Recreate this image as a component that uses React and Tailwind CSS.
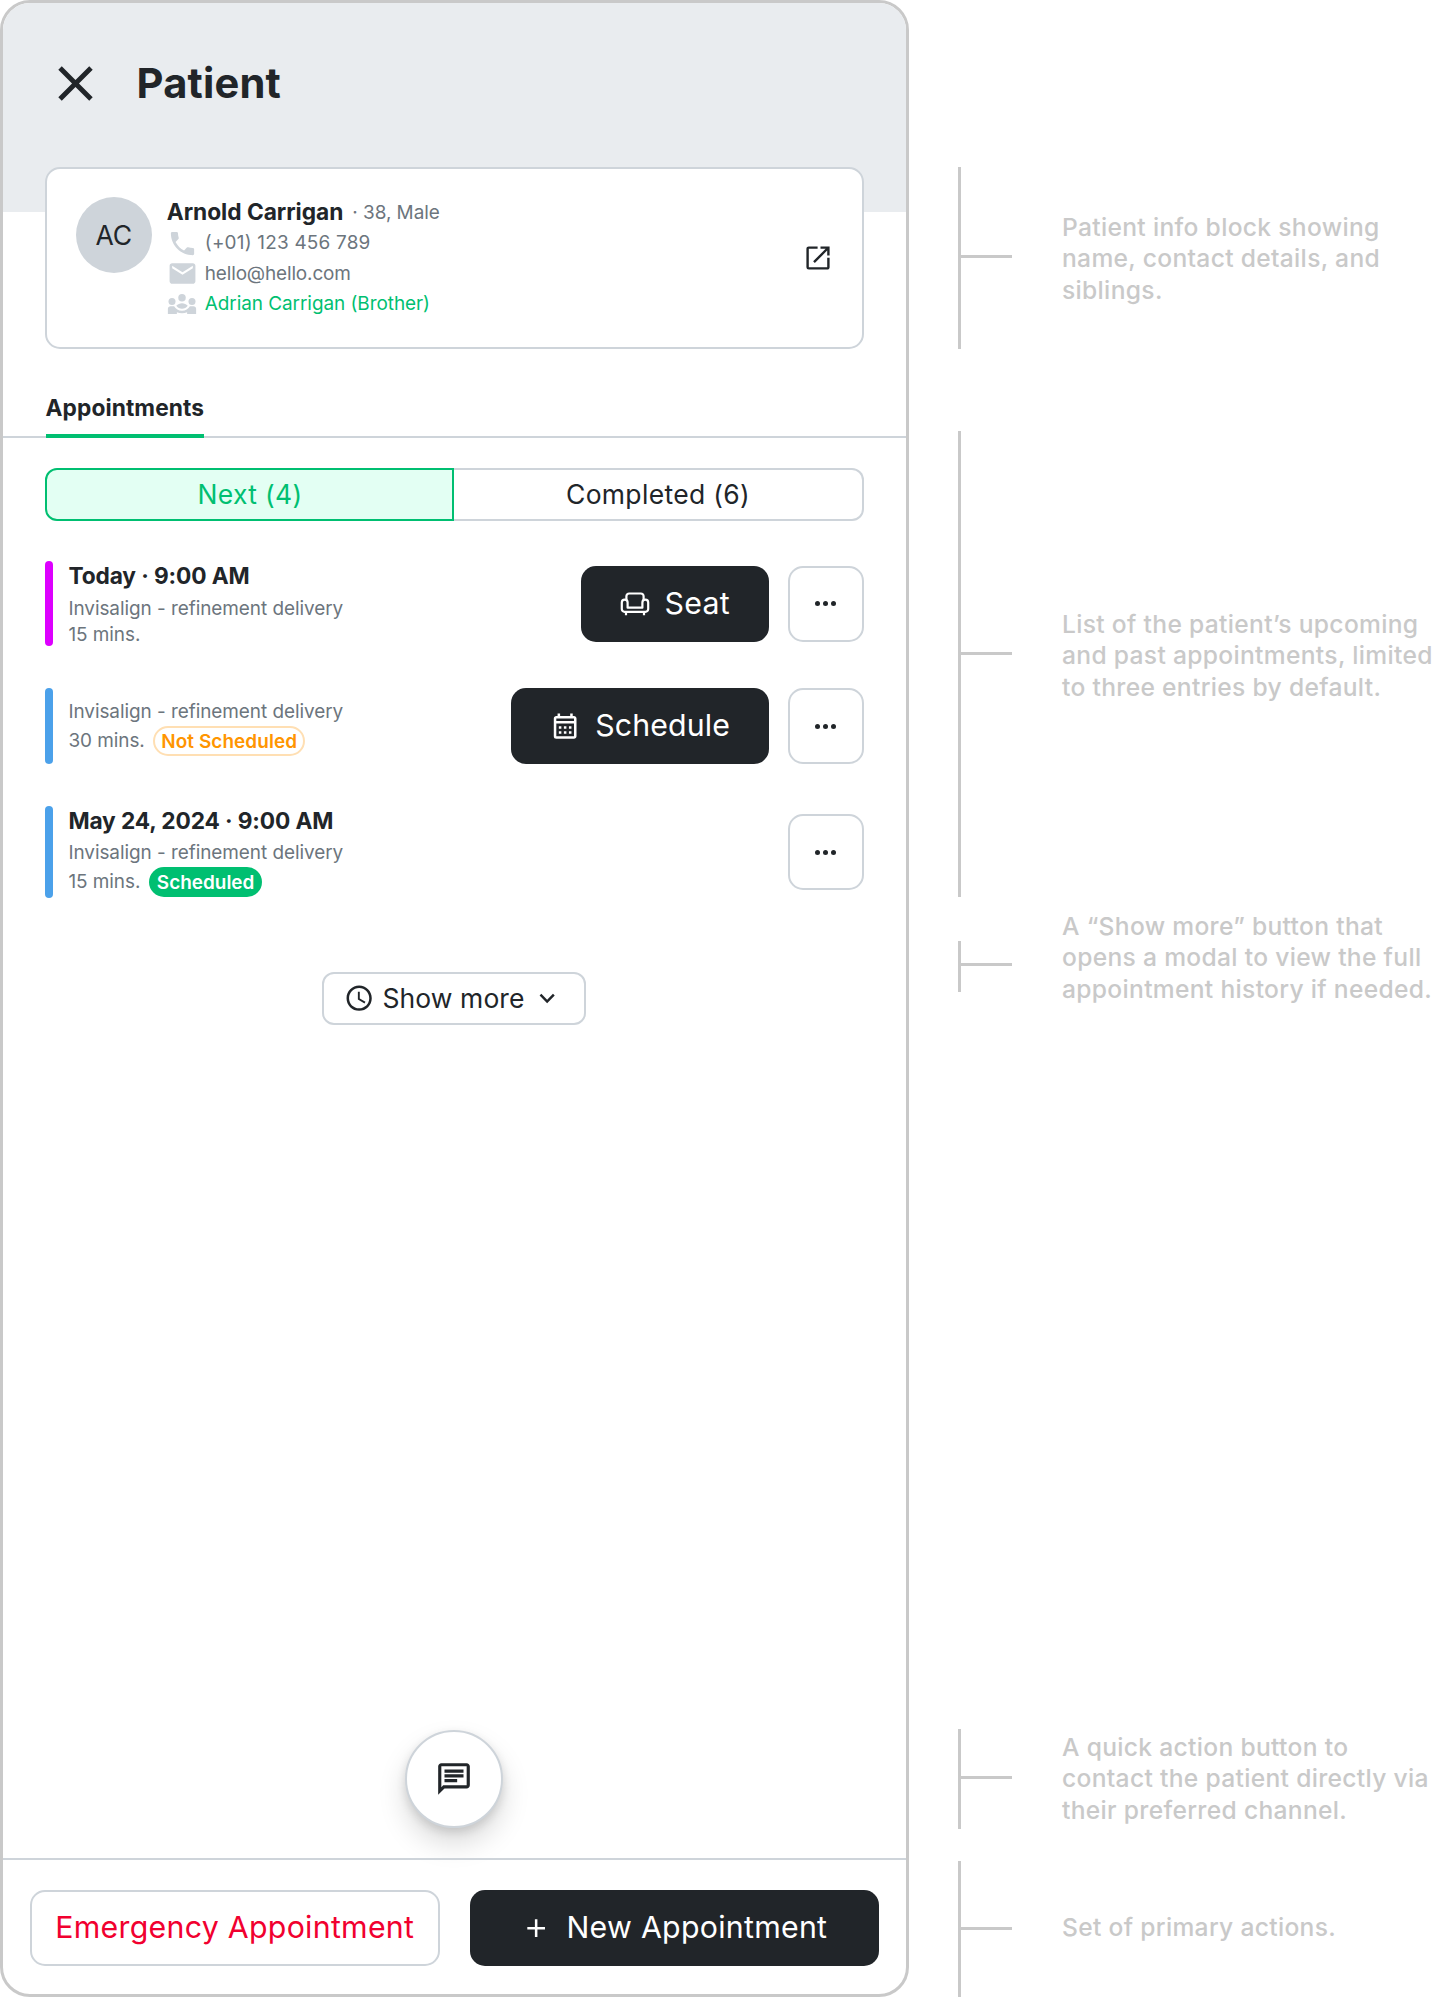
import {
  MdAdd,
  MdClose,
  MdEmail,
  MdExpandMore,
  MdOutlineCalendarMonth,
  MdOutlineChat,
  MdPhone,
  MdSchedule,
} from "react-icons/md";

function GroupIcon() {
  return (
    <svg viewBox="0 0 24 24" className="size-[30px]" fill="currentColor">
      <circle cx="12" cy="7" r="3" />
      <circle cx="4" cy="9.9" r="2.8" />
      <circle cx="20" cy="9.9" r="2.8" />
      <path d="M7.4 13.4C8.6 12 10.2 11.3 12 11.3s3.4.7 4.6 2.1c-1.1 1.5-2.7 2.3-4.6 2.3s-3.5-.8-4.6-2.3z" />
      <path d="M.7 20v-4.2c0-1.2 1-2.1 2.1-2.1h2.9c1.2 2.2 3.5 3.6 6.3 3.6s5.1-1.4 6.3-3.6h2.9c1.2 0 2.1.9 2.1 2.1V20h-7.2v-1.5c-1.2.5-2.6.8-4.1.8s-2.9-.3-4.1-.8V20z" />
    </svg>
  );
}

function ExternalIcon() {
  return (
    <svg viewBox="0 0 24 24" className="size-6" fill="none" stroke="currentColor" strokeWidth="2.4">
      <path d="M11.6 1.6H2.8A1.2 1.2 0 0 0 1.6 2.8v18.4a1.2 1.2 0 0 0 1.2 1.2h18.4a1.2 1.2 0 0 0 1.2-1.2v-9.5" />
      <path d="M14.5 1.6h7.9v7.9M22 2 8 16.2" />
    </svg>
  );
}

function SofaIcon() {
  return (
    <svg viewBox="0 0 30 30" className="size-[30px]" fill="none" stroke="currentColor" strokeWidth="2.2" strokeLinejoin="round">
      <path d="M6.4 11V7.2a2.7 2.7 0 0 1 2.7-2.7h11.8a2.7 2.7 0 0 1 2.7 2.7V11" />
      <path d="M7.6 18.7v-5.2a2.9 2.9 0 0 0-5.8 0v6.6a2.7 2.7 0 0 0 2.7 2.7h21a2.7 2.7 0 0 0 2.7-2.7v-6.6a2.9 2.9 0 0 0-5.8 0v5.2z" />
      <path d="M6 22.8v3.4M24 22.8v3.4" />
    </svg>
  );
}

function MoreButton() {
  return (
    <button className="flex size-[76px] items-center justify-center gap-[2.6px] rounded-[15px] border-2 border-[#ced4da] bg-white">
      <span className="size-[5px] rounded-full bg-[#212529]" />
      <span className="size-[5px] rounded-full bg-[#212529]" />
      <span className="size-[5px] rounded-full bg-[#212529]" />
    </button>
  );
}

function DarkButton({ icon, children }) {
  return (
    <button className="flex h-[76px] items-center gap-[15px] rounded-[15px] bg-[#212529] px-[38.5px] text-[30.3px] text-white">
      {icon}
      {children}
    </button>
  );
}

function Appointment({ className, bar, children, action }) {
  return (
    <div className={"flex items-center " + className}>
      <div className={"w-2 self-stretch rounded-full " + bar} />
      <div className="ml-[15px] flex-1 self-stretch text-[18.94px] tracking-[-0.05px] text-[#6c757d]">{children}</div>
      <div className="flex gap-[19px]">
        {action}
        <MoreButton />
      </div>
    </div>
  );
}

function Title({ children }) {
  return <h3 className="h-[31px] text-[22.73px] leading-[30.5px] font-bold tracking-[-0.12px] text-[#212529]">{children}</h3>;
}

function Annotation({ className, tick, text, children }) {
  return (
    <div className={"flex " + className}>
      <div className="w-[3px] bg-[#c9c9c9]" />
      <div className={"h-[3px] w-[51px] bg-[#c9c9c9] " + tick} />
      <p className={"ml-[50px] h-[94px] text-[24.6px] leading-[31.3px] font-medium tracking-[0.32px] whitespace-nowrap text-[#c9c9c9] " + text}>{children}</p>
    </div>
  );
}

export default function App() {
  return (
    <div className="flex h-[1997px] w-[1440px] bg-white font-['Inter',sans-serif] text-[#212529]">
      <main className="flex w-[909px] flex-col overflow-hidden rounded-[30px] border-3 border-[#c9c9c9]">
        <header className="h-[209px] shrink-0 bg-[#e9ecef]">
          <div className="flex h-[160px] items-center pl-[43px]">
            <MdClose className="size-[59px]" />
            <h1 className="ml-[31.5px] text-[41.67px] font-bold tracking-[0.175px]">Patient</h1>
          </div>
        </header>

        <section className="relative mr-[42.5px] -mt-[45px] ml-[42.4px] flex h-[182px] shrink-0 rounded-[15px] border-2 border-[#ced4da] bg-white pt-7 pr-8 pl-[28.4px]">
          <div className="flex size-[76px] items-center justify-center rounded-full bg-[#ced4da] pt-px text-[26.5px]">AC</div>
          <div className="ml-[15px] flex-1 text-[18.94px] tracking-[-0.05px] text-[#6c757d]">
            <div className="flex h-[31px] items-center">
              <h2 className="text-[22.73px] font-bold tracking-[-0.03px] text-[#212529]">Arnold Carrigan</h2>
              <span className="ml-[9px] pt-px">· 38, Male</span>
            </div>
            <div className="flex h-[30.3px] items-center gap-[7px]">
              <MdPhone className="size-[31px] text-[#ced4da]" />
              <span className="tracking-[0.2px]">(+01) 123 456 789</span>
            </div>
            <div className="flex h-[30.3px] items-center gap-[7px]">
              <MdEmail className="size-[31px] text-[#ced4da]" />
              <span className="pt-px tracking-[-0.14px]">hello@hello.com</span>
            </div>
            <div className="flex h-[30.3px] items-center gap-[7px] text-[#00bf71]">
              <span className="w-[31px] text-[#ced4da]"><GroupIcon /></span>
              Adrian Carrigan (Brother)
            </div>
          </div>
          <div className="-mt-7 flex items-center"><ExternalIcon /></div>
        </section>

        <nav className="mt-11 flex shrink-0 border-b-2 border-[#ced4da] px-[42.5px]">
          <a className="-mb-[2px] border-b-4 border-[#00bf71] pb-[11px] text-[22.73px] leading-[30px] font-bold tracking-[0.1px]">Appointments</a>
        </nav>

        <div className="mr-[42.5px] mt-[30px] ml-[42.4px] grid h-[53px] shrink-0 grid-cols-2 text-[26.5px] tracking-[0.32px]">
          <button className="rounded-l-[12px] border-2 border-[#00bf71] bg-[#e3fff3] text-[#00bf71]">Next (4)</button>
          <button className="rounded-r-[12px] border-2 border-l-0 border-[#ced4da]">Completed (6)</button>
        </div>

        <div className="mr-[42.5px] mt-10 ml-[42.4px] flex flex-col gap-[42px]">
          <Appointment className="h-[85px]" bar="bg-[#dd00ff]" action={<DarkButton icon={<SofaIcon />}><span className="tracking-[0.29px]">Seat</span></DarkButton>}>
            <Title>Today · 9:00 AM</Title>
            <p className="pt-1 leading-[26px]">Invisalign - refinement delivery</p>
            <p className="leading-[26px]">15 mins.</p>
          </Appointment>
          <Appointment className="h-[76px]" bar="bg-[#4ba1ea]" action={<DarkButton icon={<MdOutlineCalendarMonth className="size-[30.3px]" />}><span className="tracking-[0.12px]">Schedule</span></DarkButton>}>
            <p className="h-[38px] pt-[9px] leading-[30px]">Invisalign - refinement delivery</p>
            <p className="flex items-center gap-[8.5px]">
              <span className="pt-px">30 mins.</span>
              <span className="h-[30px] rounded-full border-2 border-[#ffdfb3] px-[6px] leading-[27px] font-semibold tracking-[0.07px] text-[#ff9500]">Not Scheduled</span>
            </p>
          </Appointment>
          <Appointment className="h-[92px]" bar="bg-[#4ba1ea]">
            <Title>May 24, 2024 · 9:00 AM</Title>
            <p className="h-[30px] pt-px leading-[30px]">Invisalign - refinement delivery</p>
            <p className="flex items-center gap-[8.5px]">
              <span className="pt-px">15 mins.</span>
              <span className="h-[30px] rounded-full bg-[#00bf71] px-[8px] leading-[31px] font-semibold tracking-normal text-white">Scheduled</span>
            </p>
          </Appointment>
        </div>

        <button className="mt-[74px] mr-[2px] flex h-[53px] w-[264px] shrink-0 items-center justify-center gap-[7.8px] self-center rounded-[12px] border-2 border-[#ced4da] text-[26.5px] tracking-[0.08px]">
          <MdSchedule className="size-[30.3px]" />
          Show more
          <MdExpandMore className="size-[30.3px]" />
        </button>

        <button className="mt-auto mr-[2px] mb-[30px] flex size-[98px] shrink-0 items-center justify-center self-center rounded-full border-2 border-[#ced4da] bg-white shadow-[0_15px_28px_rgba(0,0,0,0.15),0_4px_10px_rgba(0,0,0,0.12)]">
          <MdOutlineChat className="size-[38px]" />
        </button>

        <footer className="grid h-[136px] shrink-0 grid-cols-2 gap-[30px] border-t-2 border-[#ced4da] px-[27px] pt-[30px] text-[30.3px] tracking-[0.28px]">
          <button className="h-[76px] rounded-[15px] border-2 border-[#ced4da] text-[#f1002f]">Emergency Appointment</button>
          <button className="flex h-[76px] items-center justify-center gap-[15px] rounded-[15px] bg-[#212529] text-white">
            <MdAdd className="size-[30.3px]" />
            New Appointment
          </button>
        </footer>
      </main>

      <aside className="ml-[49px] flex flex-1 flex-col">
        <Annotation className="mt-[167px] h-[182px]" tick="mt-[88px]" text="mt-[45px]">
          Patient info block showing<br />name, contact details, and<br />siblings.
        </Annotation>
        <Annotation className="mt-[82px] h-[466px]" tick="mt-[221px]" text="mt-[178px]">
          List of the patient’s upcoming<br />and past appointments, limited<br />to three entries by default.
        </Annotation>
        <Annotation className="mt-[44px] h-[51px]" tick="mt-[22px]" text="-mt-[30px]">
          A “Show more” button that<br />opens a modal to view the full<br />appointment history if needed.
        </Annotation>
        <Annotation className="mt-[737px] h-[100px]" tick="mt-[47px]" text="mt-[3px]">
          A quick action button to<br />contact the patient directly via<br />their preferred channel.
        </Annotation>
        <Annotation className="mt-[32px] h-[136px]" tick="mt-[66px]" text="mt-[51px]">
          Set of primary actions.
        </Annotation>
      </aside>
    </div>
  );
}
